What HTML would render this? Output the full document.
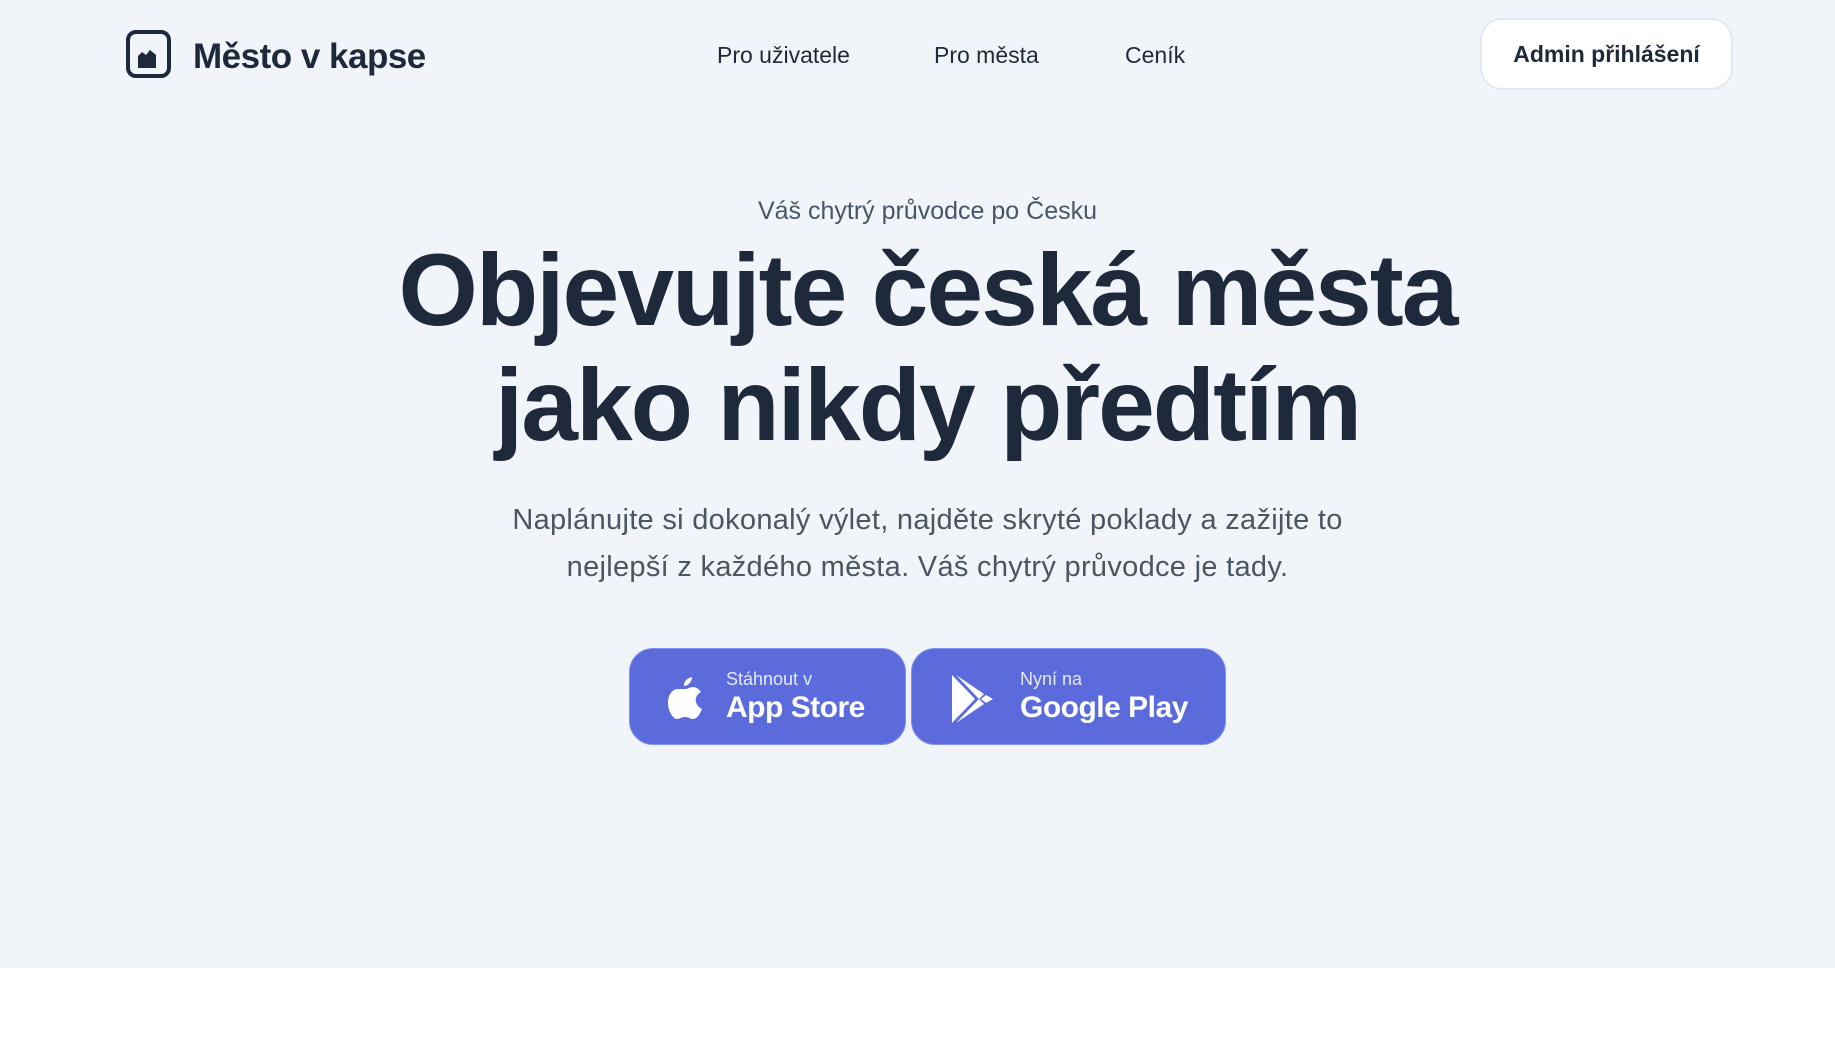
<!DOCTYPE html>
<html><head><meta charset="utf-8"><style>
*{margin:0;padding:0;box-sizing:border-box}
body{width:1835px;height:1051px;background:#fff;font-family:"Liberation Sans",sans-serif;color:#1e293b;overflow:hidden;position:relative}
.hero{position:absolute;left:0;top:0;width:1835px;height:968px;background:#f1f5f9}
.abs{position:absolute}
.logo{left:126px;top:30px;width:45px;height:48px;border:4px solid #1e293b;border-radius:10px}
.brand{left:193px;top:37px;font-size:35px;font-weight:bold;letter-spacing:-0.5px}
.nav{top:42px;font-size:23px;font-weight:500}
.admin{left:1480px;top:18px;width:253px;height:72px;background:#fff;border:2px solid #e2e8f0;border-radius:22px;font-size:23px;font-weight:bold;display:flex;align-items:center;justify-content:center}
.c{left:0;width:1835px;text-align:center;padding-left:20px}
.sub{top:197px;font-size:25px;color:#475569}
h1{position:absolute;left:0;width:1855px;text-align:center;font-size:102px;line-height:115px;font-weight:bold;letter-spacing:-2px;top:233px}
.p{top:497px;font-size:29px;line-height:47px;color:#4b5563;letter-spacing:0.3px}
.btn{top:648px;height:97px;background:#5b6bdc;border-radius:24px;color:#fff;border:1px solid #8090ee}
.btn .s{position:absolute;top:20px;font-size:18px;color:#e6e9fb}
.btn .b{position:absolute;top:42px;font-size:30px;font-weight:bold;letter-spacing:-0.5px}
</style></head><body>
<div class="hero"></div>
<div class="abs logo"><svg width="37" height="40" viewBox="0 0 37 40" style="position:absolute;left:0;top:0"><path d="M8 34 V22 L12 18 L16 21 L20 16 L26 21 V34 Z" fill="#1e293b"/></svg></div>
<div class="abs brand">Město v kapse</div>
<div class="abs nav" style="left:717px">Pro uživatele</div>
<div class="abs nav" style="left:934px">Pro města</div>
<div class="abs nav" style="left:1125px">Ceník</div>
<div class="abs admin">Admin přihlášení</div>
<div class="abs c sub">Váš chytrý průvodce po Česku</div>
<h1>Objevujte česká města<br>jako nikdy předtím</h1>
<div class="abs c p">Naplánujte si dokonalý výlet, najděte skryté poklady a zažijte to<br>nejlepší z každého města. Váš chytrý průvodce je tady.</div>
<div class="abs btn" style="left:629px;width:277px">
<svg class="abs" style="left:35px;top:26px" width="40" height="46" viewBox="0 0 40 46"><path d="M27 2 C27 7 23 11 19 11 C18.5 7 22 3 27 2Z M20 14 C23 14 25 12 28 12 C31 12 34 14 36 17 C32 19 30 23 31 27 C32 31 35 33 37 34 C35 39 32 44 28 44 C25 44 24 42 20 42 C16 42 15 44 12 44 C8 44 3 36 3 28 C3 19 8 14 13 14 C16 14 18 14 20 14Z" fill="#fff"/></svg>
<div class="s" style="left:96px">Stáhnout v</div><div class="b" style="left:96px">App Store</div></div>
<div class="abs btn" style="left:911px;width:315px">
<svg class="abs" style="left:36px;top:24px" width="50" height="52" viewBox="0 0 50 52"><path d="M4 2 L4 50 L27 26 Z" fill="#fff"/><path d="M8 2 L36 21 L31 26 Z" fill="#fff"/><path d="M8 50 L36 31 L31 26 Z" fill="#fff"/><path d="M38 22 L45 26 L38 30 L33 26Z" fill="#fff"/></svg>
<div class="s" style="left:108px">Nyní na</div><div class="b" style="left:108px">Google Play</div></div>
</body></html>
